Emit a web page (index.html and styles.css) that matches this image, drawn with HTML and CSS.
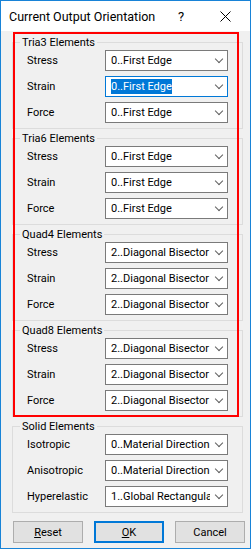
FILE: index.html
```html
<!DOCTYPE html>
<html>
<head>
<meta charset="utf-8">
<link rel="stylesheet" href="styles.css">
</head>
<body>
<div class="window">
  <div class="titlebar">
    <span class="title">Current Output Orientation</span>
    <span class="help">?</span>
    <svg class="close" width="11" height="11" viewBox="0 0 11 11"><path d="M0.5 0.5 L10.5 10.5 M10.5 0.5 L0.5 10.5" stroke="#000" stroke-width="1" fill="none"/></svg>
  </div>
  <div class="client">
    <div class="group">
      <div class="legend">Tria3 Elements</div>
      <div class="row"><span class="lbl">Stress</span><div class="combo"><span class="val">0..First Edge</span><span class="chev"></span></div></div>
      <div class="row"><span class="lbl">Strain</span><div class="combo focus"><span class="val sel">0..First Edge</span><span class="chev"></span></div></div>
      <div class="row"><span class="lbl">Force</span><div class="combo"><span class="val">0..First Edge</span><span class="chev"></span></div></div>
    </div>
    <div class="group">
      <div class="legend">Tria6 Elements</div>
      <div class="row"><span class="lbl">Stress</span><div class="combo"><span class="val">0..First Edge</span><span class="chev"></span></div></div>
      <div class="row"><span class="lbl">Strain</span><div class="combo"><span class="val">0..First Edge</span><span class="chev"></span></div></div>
      <div class="row"><span class="lbl">Force</span><div class="combo"><span class="val">0..First Edge</span><span class="chev"></span></div></div>
    </div>
    <div class="group">
      <div class="legend">Quad4 Elements</div>
      <div class="row"><span class="lbl">Stress</span><div class="combo"><span class="val">2..Diagonal Bisector</span><span class="chev"></span></div></div>
      <div class="row"><span class="lbl">Strain</span><div class="combo"><span class="val">2..Diagonal Bisector</span><span class="chev"></span></div></div>
      <div class="row"><span class="lbl">Force</span><div class="combo"><span class="val">2..Diagonal Bisector</span><span class="chev"></span></div></div>
    </div>
    <div class="group">
      <div class="legend">Quad8 Elements</div>
      <div class="row"><span class="lbl">Stress</span><div class="combo"><span class="val">2..Diagonal Bisector</span><span class="chev"></span></div></div>
      <div class="row"><span class="lbl">Strain</span><div class="combo"><span class="val">2..Diagonal Bisector</span><span class="chev"></span></div></div>
      <div class="row"><span class="lbl">Force</span><div class="combo"><span class="val">2..Diagonal Bisector</span><span class="chev"></span></div></div>
    </div>
    <div class="group">
      <div class="legend">Solid Elements</div>
      <div class="row"><span class="lbl">Isotropic</span><div class="combo"><span class="val">0..Material Direction</span><span class="chev"></span></div></div>
      <div class="row"><span class="lbl">Anisotropic</span><div class="combo"><span class="val">0..Material Direction</span><span class="chev"></span></div></div>
      <div class="row"><span class="lbl">Hyperelastic</span><div class="combo"><span class="val">1..Global Rectangular</span><span class="chev"></span></div></div>
    </div>
    <div class="buttons">
      <div class="btn"><u>R</u>eset</div>
      <div class="btn default"><u>O</u>K</div>
      <div class="btn">Cancel</div>
    </div>
  </div>
  <div class="highlight"></div>
</div>
</body>
</html>
```
FILE: styles.css
```css
html, body {
  margin: 0;
  padding: 0;
  background: #ffffff;
}
body {
  font-family: Roboto, "Noto Sans", sans-serif;
  font-size: 11px;
  color: #000;
}
.window {
  position: relative;
  width: 251px;
  height: 549px;
  box-sizing: border-box;
  border: 1px solid #1883d7;
  display: flex;
  flex-direction: column;
  background: #f0f0f0;
}
.titlebar {
  height: 30px;
  background: #ffffff;
  display: flex;
  align-items: center;
  padding-left: 8px;
  font-size: 12.5px;
}
.title {
  flex: 1;
}
.help {
  width: 12px;
  margin-right: 30px;
  font-size: 13px;
}
.close {
  margin-right: 19px;
}
.client {
  flex: 1;
  padding: 11px 0 5px 11px;
  display: flex;
  flex-direction: column;
  gap: 9px;
}
.group {
  width: 231px;
  box-sizing: border-box;
  border: 1px solid #dcdcdc;
  padding: 0 0 5px 14px;
  display: flex;
  flex-direction: column;
  gap: 5px;
}
.legend {
  margin: -7px 0 -5px -7px;
  padding: 0 2px 0 2px;
  height: 14px;
  line-height: 14px;
  background: #f0f0f0;
  width: fit-content;
}
.row {
  display: flex;
  align-items: center;
  height: 21px;
}
.lbl {
  width: 78px;
}
.combo {
  width: 123px;
  height: 21px;
  box-sizing: border-box;
  border: 1px solid #7a7a7a;
  background: #ffffff;
  display: flex;
  align-items: center;
  padding-left: 5px;
  position: relative;
}
.combo.focus {
  border-color: #0078d7;
}
.val {
  flex: 1;
  white-space: nowrap;
  overflow: hidden;
  line-height: 15px;
}
.val.sel {
  flex: none;
  background: #0078d7;
  color: #ffffff;
  margin-right: auto;
}
.chev {
  width: 17px;
  height: 19px;
  flex: none;
  background: #ffffff;
  display: flex;
  align-items: center;
  justify-content: center;
}
.chev::before {
  content: "";
  width: 5px;
  height: 5px;
  border-right: 1px solid #606060;
  border-bottom: 1px solid #606060;
  transform: translateY(-2px) rotate(45deg);
}
.combo.focus .chev {
  margin-left: auto;
}
.buttons {
  display: flex;
  gap: 11px;
  margin-top: -1px;
  padding-left: 1px;
}
.btn {
  width: 70px;
  height: 22px;
  box-sizing: border-box;
  border: 1px solid #adadad;
  background: #e1e1e1;
  display: flex;
  align-items: center;
  justify-content: center;
}
.btn.default {
  border: 2px solid #0078d7;
}
.highlight {
  position: absolute;
  left: 12px;
  top: 31px;
  width: 226px;
  height: 385px;
  box-sizing: border-box;
  border: 2px solid #ff0000;
  pointer-events: none;
}
```
